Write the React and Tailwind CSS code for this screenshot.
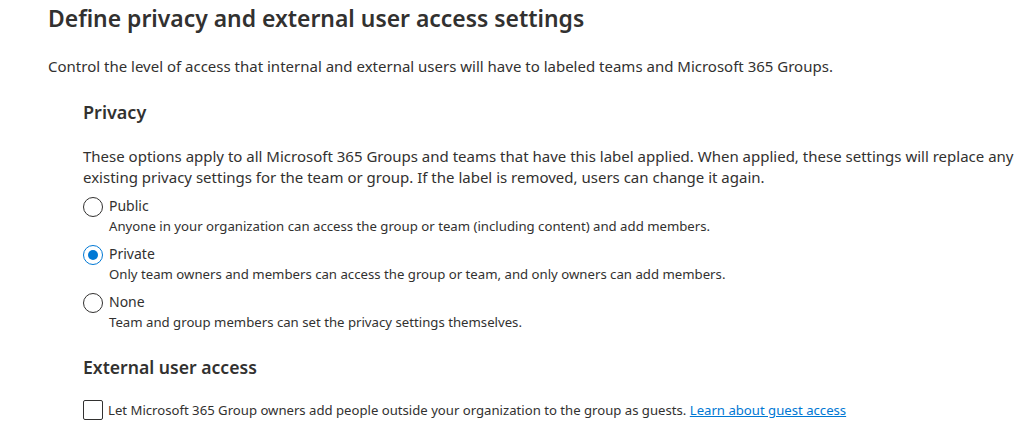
import React, { useState } from 'react';

const options = [
    { id: 'public', label: 'Public', desc: 'Anyone in your organization can access the group or team (including content) and add members.' },
    { id: 'private', label: 'Private', desc: 'Only team owners and members can access the group or team, and only owners can add members.' },
    { id: 'none', label: 'None', desc: 'Team and group members can set the privacy settings themselves.' },
];

const Radio = ({ checked }) => (
    <span
        className={
            'mt-[1px] flex h-5 w-5 shrink-0 items-center justify-center rounded-full border ' +
            (checked ? 'border-[#0078d4]' : 'border-[#323130]')
        }
    >
        {checked && <span className="h-[10px] w-[10px] rounded-full bg-[#0078d4]"></span>}
    </span>
);

const App = () => {
    const [privacy, setPrivacy] = useState('private');
    const [guests, setGuests] = useState(false);

    return (
        <div className="min-h-screen bg-white pl-12 pt-[3px] text-[#323130]" style={{ fontFamily: '"Noto Sans", "Open Sans", sans-serif' }}>
            <h1 className="text-[22.9px] font-semibold leading-8">Define privacy and external user access settings</h1>
            <p className="mt-[21px] text-[15px] leading-5">
                Control the level of access that internal and external users will have to labeled teams and Microsoft 365 Groups.
            </p>

            <div className="pl-[35px]">
                <h2 className="mt-[24px] text-[18px] font-semibold leading-6">Privacy</h2>
                <p className="mt-[22px] text-[15px] leading-[21px]">
                    These options apply to all Microsoft 365 Groups and teams that have this label applied. When applied, these settings will replace any
                    existing privacy settings for the team or group. If the label is removed, users can change it again.
                </p>

                <div className="mt-[8px] flex flex-col gap-[8px]">
                    {options.map((o) => (
                        <label key={o.id} className="flex cursor-pointer items-start gap-[6px]" onClick={() => setPrivacy(o.id)}>
                            <Radio checked={privacy === o.id} />
                            <span className="flex flex-col">
                                <span className="text-[14px] leading-[20px]">{o.label}</span>
                                <span className="text-[13.2px] leading-[20px]">{o.desc}</span>
                            </span>
                        </label>
                    ))}
                </div>

                <h2 className="mt-[23px] text-[17.6px] font-semibold leading-6">External user access</h2>
                <label className="mt-[21px] flex cursor-pointer items-center gap-[5px]" onClick={() => setGuests(!guests)}>
                    <span className="flex h-5 w-5 shrink-0 items-center justify-center rounded-[2px] border border-[#323130]">
                        {guests && <span className="text-[12px] leading-none">✓</span>}
                    </span>
                    <span className="text-[13.15px] leading-5">
                        Let Microsoft 365 Group owners add people outside your organization to the group as guests.{' '}
                        <a href="#" className="text-[#0078d4] underline">Learn about guest access</a>
                    </span>
                </label>
            </div>
        </div>
    );
};

export default App;
